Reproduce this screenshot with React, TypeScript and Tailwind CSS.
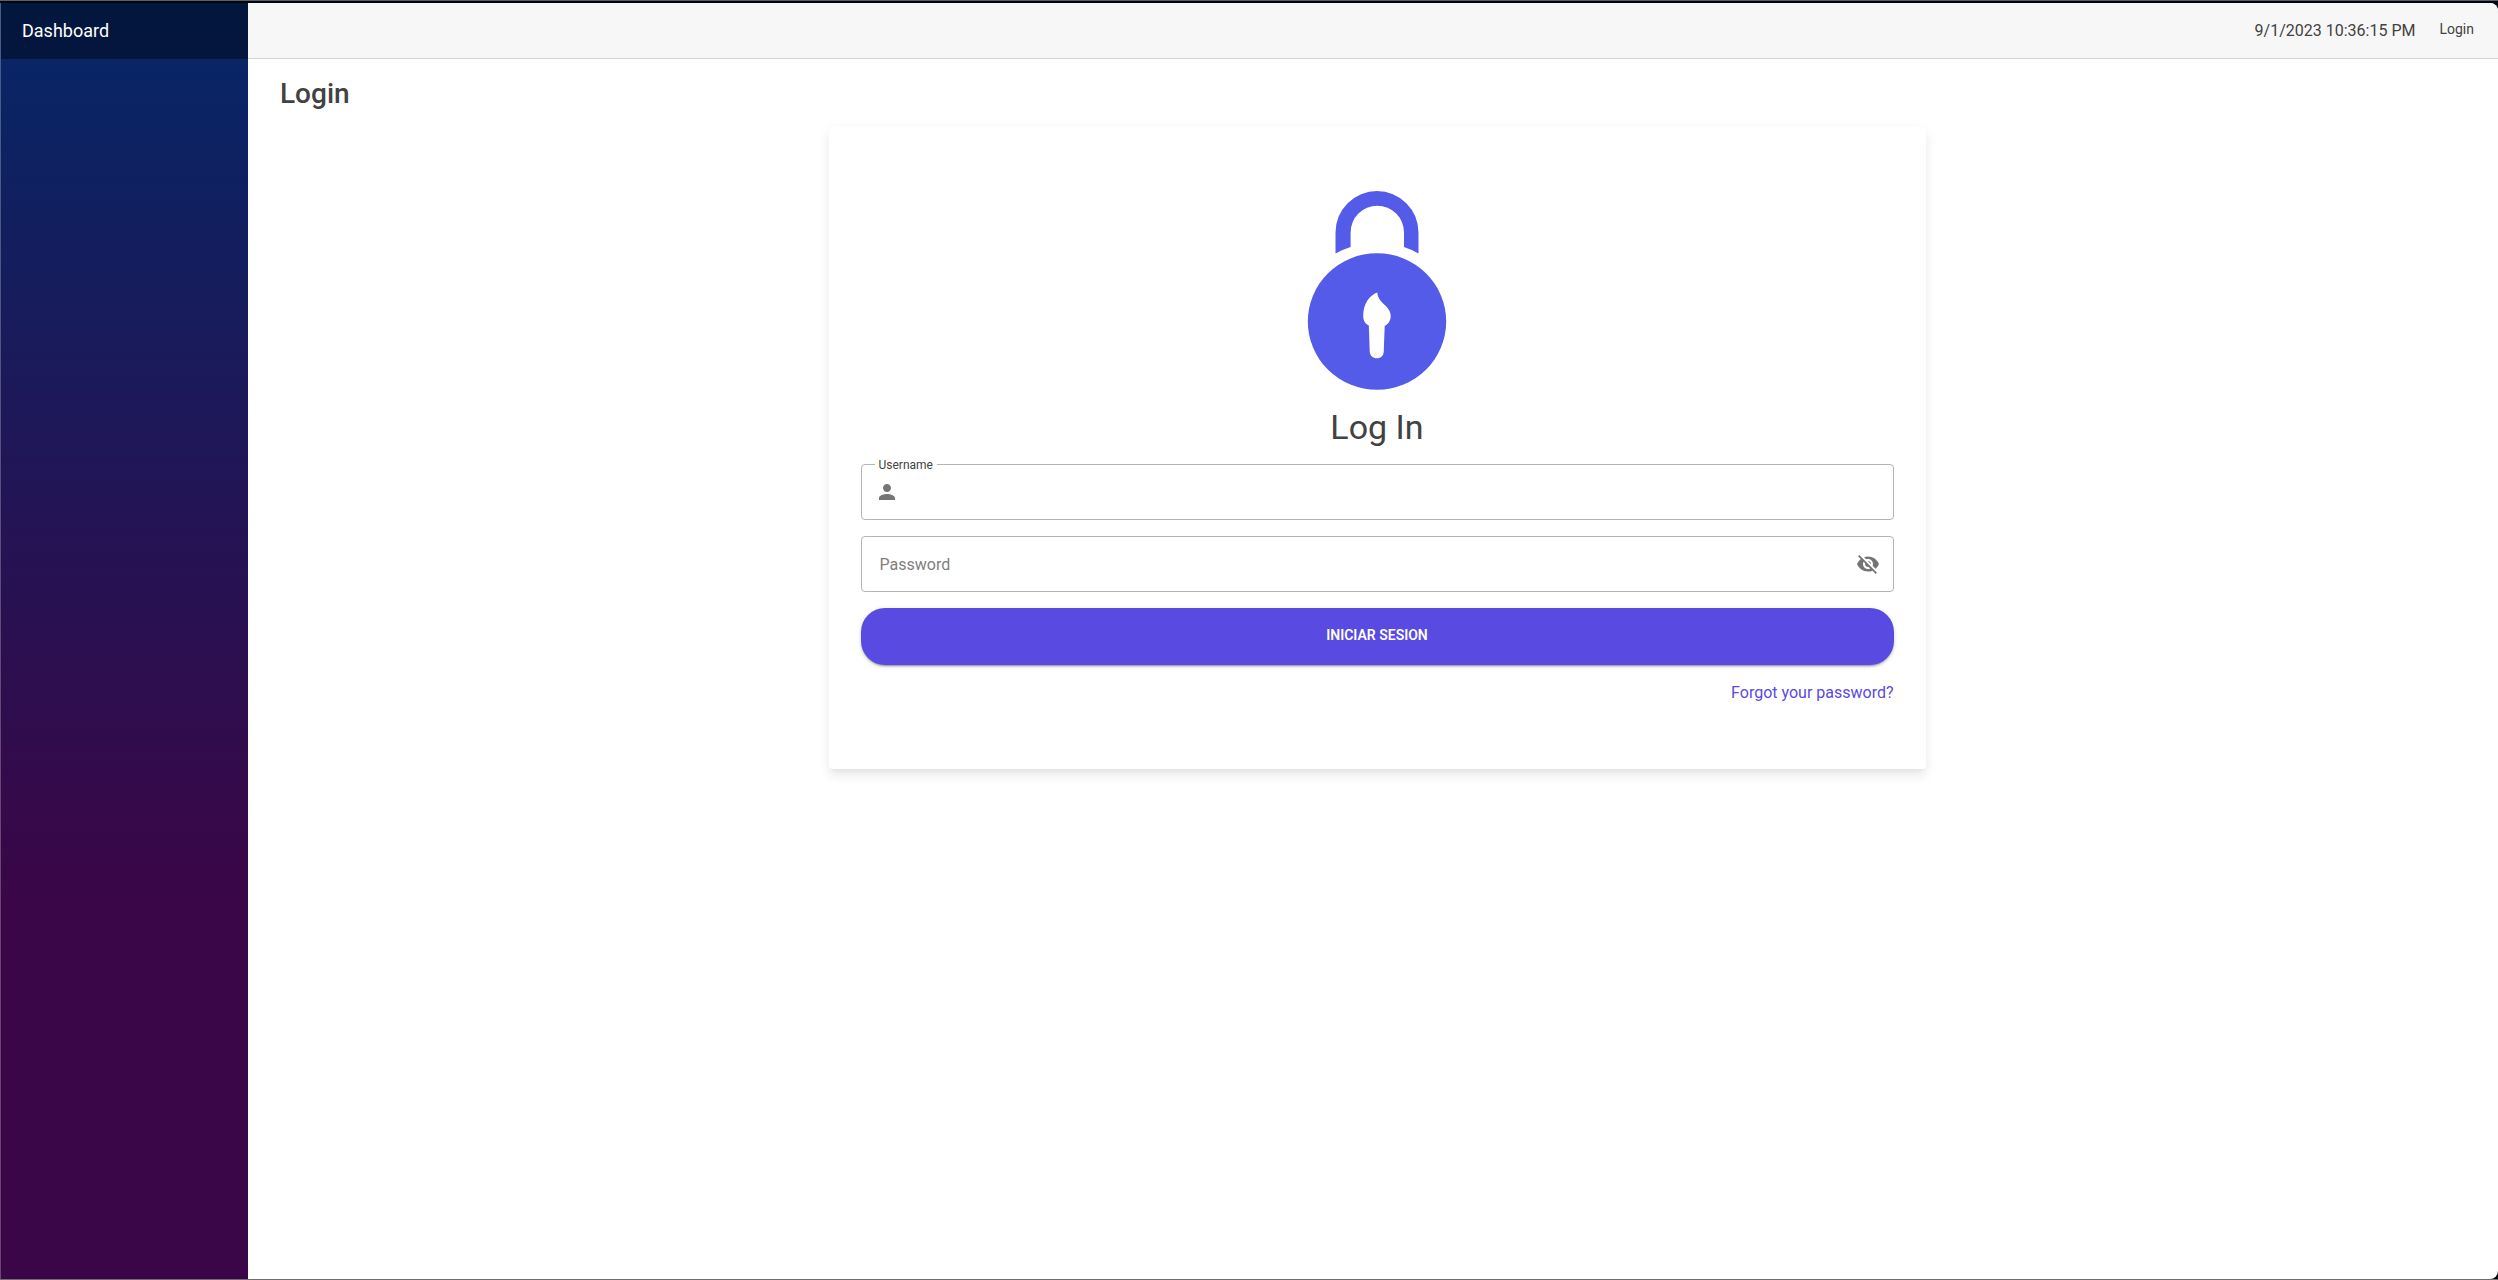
import { useState } from "react";
import { MdPerson, MdVisibility, MdVisibilityOff } from "react-icons/md";

function LockLogo() {
  return (
    <svg viewBox="0 0 140 200" className="h-50 w-35 fill-[#545be9]" aria-hidden="true">
      <path d="M28.5 62.5V41.5a41.5 41.5 0 0 1 83 0v21q-7-4-14.500-6.500V41.500a26.700 26.700 0 0 0-53.400 0V56q-8 2.500-15.100 6.500Z" />
      <ellipse cx="70" cy="130.500" rx="69.200" ry="68.200" />
      <path
        className="fill-white"
        d="M70.300 101.600c.5 11 13.400 13 13.400 23.400 0 4.500-2.300 8-6 10-.3 9-.7 17-.9 25-.2 5-3 7.300-6.900 7.300s-7.100-2.300-7.200-7.300c-.2-9-.6-17-.9-25.500-3.500-1.500-5.600-5-5.600-9.500 0-12 6.100-20.400 14.100-23.400Z"
      />
    </svg>
  );
}

function Sidebar() {
  return (
    <aside className="w-62 shrink-0 border-l border-white/25 bg-[linear-gradient(180deg,#052767_0%,#3a0647_70%)]">
      <div className="flex h-14 items-center bg-black/40 pl-[21px]">
        <a href="#" className="text-lg leading-6 text-white">
          Dashboard
        </a>
      </div>
    </aside>
  );
}

function TopBar() {
  return (
    <header className="flex h-14 items-center justify-end gap-6 border-b border-[#d6d5d5] bg-[#f7f7f7] pr-6">
      <time>9/1/2023 10:36:15 PM</time>
      <a href="#" className="pb-1 text-sm">
        Login
      </a>
    </header>
  );
}

function LoginCard() {
  const [shown, setShown] = useState(false);
  return (
    <form
      onSubmit={(e) => e.preventDefault()}
      className="mx-auto mt-4 flex w-1/2 flex-col gap-4 rounded bg-white px-8 py-16 shadow-[0_5px_5px_-3px_rgba(0,0,0,.06),0_8px_10px_1px_rgba(0,0,0,.042),0_3px_14px_2px_rgba(0,0,0,.036)]"
    >
      <div className="flex flex-col items-center gap-[15px]">
        <LockLogo />
        <h2 className="text-[34px] leading-[42px]">Log In</h2>
      </div>

      <div className="relative flex h-14 items-center rounded border border-[#b5b5b5] px-[13px]">
        <label htmlFor="username" className="absolute -top-2 left-[13px] bg-white px-1 text-xs leading-4">
          Username
        </label>
        <MdPerson className="size-6 text-[#757575]" />
        <input id="username" type="text" className="h-full min-w-0 grow pl-2 outline-none" />
      </div>

      <div className="flex h-14 items-center rounded border border-[#b5b5b5] pr-[13px]">
        <input
          type={shown ? "text" : "password"}
          aria-label="Password"
          placeholder="Password"
          className="h-full min-w-0 grow pl-[18px] outline-none placeholder:text-[#808080]"
        />
        <button type="button" aria-label="Toggle password visibility" onClick={() => setShown(!shown)}>
          {shown ? (
            <MdVisibility className="size-6 text-[#757575]" />
          ) : (
            <MdVisibilityOff className="size-6 text-[#757575]" />
          )}
        </button>
      </div>

      <button
        type="submit"
        className="h-[57px] rounded-3xl bg-[#594ae2] pb-1 text-sm font-semibold text-white uppercase shadow-[0_3px_1px_-2px_rgba(0,0,0,.2),0_2px_2px_0_rgba(0,0,0,.14),0_1px_5px_0_rgba(0,0,0,.12)]"
      >
        Iniciar Sesion
      </button>

      <a href="#" className="self-end text-[#594ae2]">
        Forgot your password?
      </a>
    </form>
  );
}

export default function App() {
  return (
    <div className="flex min-h-screen flex-col border-t border-b border-t-[#5b6068] border-b-[#6e6e6e] bg-[#02060f] pt-0.5 font-['Roboto',sans-serif] text-[#424242]">
      <div className="flex grow overflow-hidden rounded-r-lg bg-white">
        <Sidebar />
        <div className="grow">
          <TopBar />
          <main className="pt-[18px] pr-6 pl-8">
            <h1 className="text-[28px] leading-[34px] font-medium">Login</h1>
            <LoginCard />
          </main>
        </div>
      </div>
    </div>
  );
}
